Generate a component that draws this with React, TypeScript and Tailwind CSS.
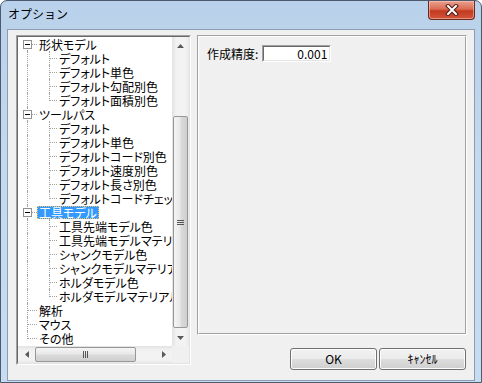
import React from 'react';

type TreeItem = {
  label: string;
  level: 0 | 1;
  box?: boolean;
  first?: boolean;
  lastRoot?: boolean;
  last?: boolean;
  selected?: boolean;
};

const rows: TreeItem[] = [
  { label: '形状モデル', level: 0, box: true, first: true },
  { label: 'デフォルト', level: 1 },
  { label: 'デフォルト単色', level: 1 },
  { label: 'デフォルト勾配別色', level: 1 },
  { label: 'デフォルト面積別色', level: 1, last: true },
  { label: 'ツールパス', level: 0, box: true },
  { label: 'デフォルト', level: 1 },
  { label: 'デフォルト単色', level: 1 },
  { label: 'デフォルトコード別色', level: 1 },
  { label: 'デフォルト速度別色', level: 1 },
  { label: 'デフォルト長さ別色', level: 1 },
  { label: 'デフォルトコードチェック', level: 1, last: true },
  { label: '工具モデル', level: 0, box: true, selected: true },
  { label: '工具先端モデル色', level: 1 },
  { label: '工具先端モデルマテリアル', level: 1 },
  { label: 'シャンクモデル色', level: 1 },
  { label: 'シャンクモデルマテリアル', level: 1 },
  { label: 'ホルダモデル色', level: 1 },
  { label: 'ホルダモデルマテリアル', level: 1, last: true },
  { label: '解析', level: 0 },
  { label: 'マウス', level: 0 },
  { label: 'その他', level: 0, lastRoot: true },
];

const DOT = 'border-[#a0a0a0] border-dotted';

function Row({ r }: { r: TreeItem }) {
  const isRoot = r.level === 0;
  return (
    <div className="relative h-[14px] flex items-center whitespace-nowrap">
      {/* root line */}
      <div
        className={`absolute left-[9px] w-0 border-l ${DOT} ${
          r.first ? 'top-[7px] bottom-0' : r.lastRoot ? 'top-0 h-[8px]' : 'top-0 bottom-0'
        }`}
      />
      {isRoot && <div className={`absolute left-[10px] top-[7px] w-[9px] h-0 border-t ${DOT}`} />}
      {!isRoot && (
        <>
          <div className={`absolute left-[31px] w-0 border-l ${DOT} ${r.last ? 'top-0 h-[8px]' : 'top-0 bottom-0'}`} />
          <div className={`absolute left-[32px] top-[7px] w-[7px] h-0 border-t ${DOT}`} />
        </>
      )}
      {r.box && (
        <div className="absolute left-[5px] top-[3px] w-[9px] h-[9px] border border-[#919191] bg-white">
          <div className="absolute left-[1px] top-[3px] w-[5px] h-[1px] bg-black" />
        </div>
      )}
      <span
        className={`${isRoot ? 'ml-[19px]' : 'ml-[39px]'} h-[13px] leading-[11px] px-[1px] border ${
          r.selected ? 'bg-[#3399ff] text-white border-dotted border-[#f5c060]' : 'border-transparent text-black'
        }`}
      >
        {r.label}
      </span>
    </div>
  );
}

function Arrow({ dir }: { dir: 'up' | 'down' | 'left' | 'right' }) {
  const pts = {
    up: '0,4 3.5,0 7,4',
    down: '0,0 3.5,4 7,0',
    left: '4,0 0,3.5 4,7',
    right: '0,0 4,3.5 0,7',
  }[dir];
  const vertical = dir === 'up' || dir === 'down';
  return (
    <div className="w-[17px] h-[17px] flex items-center justify-center shrink-0">
      <svg width={vertical ? 7 : 4} height={vertical ? 4 : 7}>
        <polygon points={pts} fill="#5a5a5a" />
      </svg>
    </div>
  );
}

function VScroll() {
  return (
    <div className="w-[17px] h-full flex flex-col bg-[linear-gradient(to_right,#e2e2e2,#f2f2f2_25%,#f3f3f3_80%,#e8e8e8)]">
      <Arrow dir="up" />
      <div className="flex-1 flex flex-col px-[1px]">
        <div className="h-[62px]" />
        <div className="h-[212px] rounded-[2px] border border-[#979797] bg-[linear-gradient(to_right,#f4f4f4,#e9e9e9_45%,#dadada_55%,#cfcfcf)] flex flex-col items-center justify-center gap-[1px]">
          <div className="w-[7px] h-[1px] bg-[#555]" />
          <div className="w-[7px] h-[1px] bg-[#555]" />
          <div className="w-[7px] h-[1px] bg-[#555]" />
        </div>
      </div>
      <Arrow dir="down" />
    </div>
  );
}

function HScroll() {
  return (
    <div className="h-[17px] flex bg-[linear-gradient(to_bottom,#e2e2e2,#f2f2f2_25%,#f3f3f3_80%,#e8e8e8)]">
      <Arrow dir="left" />
      <div className="flex-1 flex py-[1px]">
        <div className="w-[101px] rounded-[2px] border border-[#979797] bg-[linear-gradient(to_bottom,#f4f4f4,#e9e9e9_45%,#dadada_55%,#cfcfcf)] flex items-center justify-center gap-[1px]">
          <div className="w-[1px] h-[7px] bg-[#555]" />
          <div className="w-[1px] h-[7px] bg-[#555]" />
          <div className="w-[1px] h-[7px] bg-[#555]" />
        </div>
      </div>
      <Arrow dir="right" />
    </div>
  );
}

function CloseButton() {
  return (
    <div className="w-[47px] h-[19px] rounded-b-[4px] border border-t-0 border-[#6b2a20] bg-[linear-gradient(to_bottom,#eaa090,#d96c52_45%,#c23a20_55%,#d4553a)] flex items-center justify-center shadow-[inset_0_0_0_1px_rgba(255,210,200,0.5)]">
      <svg width="14" height="12" viewBox="0 0 14 12">
        <path d="M3 2 L11 10 M11 2 L3 10" stroke="#4a1a14" strokeWidth="4" strokeLinecap="square" />
        <path d="M3 2 L11 10 M11 2 L3 10" stroke="#ffffff" strokeWidth="2" strokeLinecap="square" />
      </svg>
    </div>
  );
}

function WinButton({ children }: { children: React.ReactNode }) {
  return (
    <button className="w-[87px] h-[22px] rounded-[3px] border border-[#707070] bg-[linear-gradient(to_bottom,#f2f2f2,#ebebeb_48%,#dddddd_52%,#cfcfcf)] shadow-[inset_0_0_0_1px_#fcfcfc] text-[12px] text-black leading-none">
      {children}
    </button>
  );
}

export default function App() {
  return (
    <div className="w-[482px] h-[383px] font-['Noto_Sans_CJK_JP','Noto_Sans',sans-serif] text-[12px] text-black">
      <div className="w-full h-full flex flex-col border border-[#4b5a6d] rounded-t-[7px] bg-[linear-gradient(to_bottom,#b9d1ea,#c4d8ee_40%,#c8dcf1)]">
        {/* Title bar */}
        <div className="h-[28px] flex justify-between">
          <div className="pl-[7px] pt-[5px] text-[12px] leading-[16px]">オプション</div>
          <div className="mr-[6px]">
            <CloseButton />
          </div>
        </div>

        {/* Client area */}
        <div className="mx-[6px] mb-[1px] flex-1 border border-[#8a9db3] bg-[#f0f0f0] flex pl-[8px] pt-[5px]">
          {/* Tree view */}
          <div className="w-[175px] h-[330px] border-t border-l border-[#a0a0a0] border-r border-r-white border-b border-b-white">
            <div className="w-full h-full border-t border-l border-[#696969] border-r border-r-[#e3e3e3] border-b border-b-[#e3e3e3] flex flex-col bg-white">
              <div className="flex h-[309px]">
                <div className="w-[154px] h-full overflow-hidden [font-feature-settings:'palt']">
                  {rows.map((r, i) => (
                    <Row key={i} r={r} />
                  ))}
                </div>
                <VScroll />
              </div>
              <div className="flex">
                <div className="w-[154px]">
                  <HScroll />
                </div>
                <div className="w-[17px] h-[17px] bg-[#f0f0f0]" />
              </div>
            </div>
          </div>

          {/* Right side */}
          <div className="ml-[6px] w-[270px] flex flex-col">
            <div className="h-[300px] border-t border-l border-[#a0a0a0] border-r border-r-white border-b border-b-white">
              <div className="w-full h-full border-t border-l border-white border-r border-r-[#a0a0a0] border-b border-b-[#a0a0a0] pl-[8px] pt-[8px]">
                <div className="flex items-center gap-[4px]">
                  <span className="leading-[14px]">作成精度:</span>
                  <div className="w-[69px] h-[17px] border-t border-l border-[#a0a0a0] border-r border-r-white border-b border-b-white">
                    <div className="w-full h-full border-t border-l border-[#696969] border-r border-r-[#e3e3e3] border-b border-b-[#e3e3e3] bg-white flex items-center justify-end pr-[2px] leading-[12px]">
                      0.001
                    </div>
                  </div>
                </div>
              </div>
            </div>
            <div className="mt-[13px] flex justify-end gap-[2px] pr-[1px]">
              <WinButton>OK</WinButton>
              <WinButton>ｷｬﾝｾﾙ</WinButton>
            </div>
          </div>
        </div>
      </div>
    </div>
  );
}
